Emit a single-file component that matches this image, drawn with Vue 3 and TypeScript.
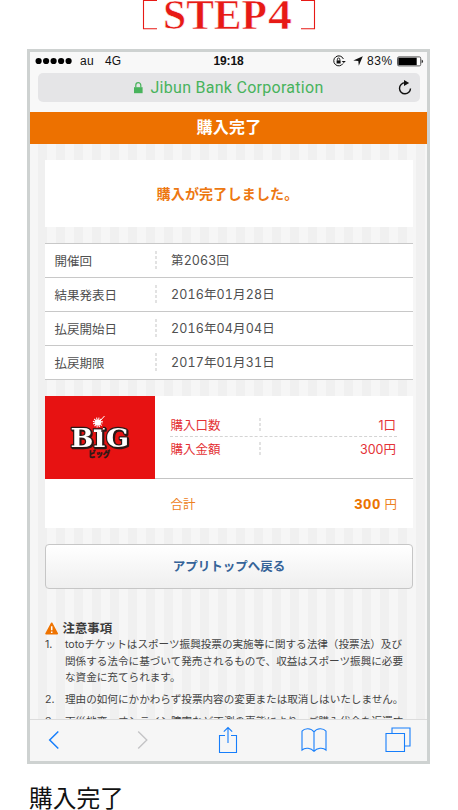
<script setup lang="ts">
interface Row { label: string; value: string }

const rows: Row[] = [
  { label: '開催回', value: '第2063回' },
  { label: '結果発表日', value: '2016年01月28日' },
  { label: '払戻開始日', value: '2016年04月04日' },
  { label: '払戻期限', value: '2017年01月31日' },
]

const notes: string[][] = [
  [
    'totoチケットはスポーツ振興投票の実施等に関する法律（投票法）及び',
    '関係する法令に基づいて発売されるもので、収益はスポーツ振興に必要',
    'な資金に充てられます。',
  ],
  ['理由の如何にかかわらず投票内容の変更または取消しはいたしません。'],
  ['天災地変、オンライン障害など不測の事態により、ご購入代金を返還す'],
]
</script>

<template>
  <main class="page">
    <header class="step">
      <svg width="172" height="40" viewBox="0 0 172 40">
        <path d="M14 .5H.5v28.3H14M158 .5h13.5v28.3H158" fill="none" stroke="#e71a16" stroke-width="1.1" />
        <text x="20" y="29.2" textLength="104" lengthAdjust="spacingAndGlyphs" class="step-text">STEP</text>
        <text x="125" y="29.2" textLength="24" lengthAdjust="spacingAndGlyphs" class="step-text">4</text>
      </svg>
    </header>

    <section class="phone">
      <div class="status">
        <div class="side">
          <svg width="38" height="8" viewBox="0 0 38 8">
            <circle v-for="i in 5" :key="i" :cx="i * 7.5 - 3.9" cy="4" r="3.1" />
          </svg>
          <span class="carrier">au</span><span>4G</span>
        </div>
        <span class="clock">19:18</span>
        <div class="side right">
          <svg width="14" height="12" viewBox="0 0 14 12" fill="none" stroke="#111">
            <path d="M10.4 4A5 5 0 1 0 10 8.5" />
            <path d="M8.6 6h4.2l-2 2z" fill="#111" stroke="none" />
            <path d="M3.6 5.4h4v3.1h-4z" fill="#111" stroke="none" />
            <path d="M4.4 5.5V4.2a1.2 1.2 0 0 1 2.4 0v1.3" stroke-width=".9" />
          </svg>
          <svg class="arrow" width="10" height="10" viewBox="0 0 10 10"><path d="M9.8.3 5.8 9.7 5.3 5 .3 4.4z" fill="#111" /></svg>
          <span class="percent">83%</span>
          <svg class="battery" width="27" height="11" viewBox="0 0 27 11">
            <rect x=".5" y=".9" width="23.2" height="9" rx="1.4" fill="#fff" stroke="#333" stroke-width=".8" />
            <path d="M1.3 1.7h18.4v7.4H1.3z" fill="#000" />
            <path d="M24.6 3.5c2 .6 2 3.2 0 3.8z" fill="#333" />
          </svg>
        </div>
      </div>

      <div class="address">
        <svg width="9" height="12" viewBox="0 0 9 12">
          <path d="M0 5.2h8.6v6H0z" fill="#48b35c" />
          <path d="M1.8 5.4V3.2a2.5 2.5 0 0 1 5 0v2.2" fill="none" stroke="#48b35c" stroke-width="1.2" />
        </svg>
        <span class="host">Jibun Bank Corporation</span>
        <svg class="reload" width="16" height="18" viewBox="0 0 16 18">
          <path d="M8.8 3.8H8a5.5 5.5 0 1 0 5.5 5.6" fill="none" stroke="#111" stroke-width="1.4" />
          <path d="M7 1l5.2 3-5.2 3z" fill="#111" />
        </svg>
      </div>

      <h1 class="title">購入完了</h1>

      <div class="content">
        <p class="message">購入が完了しました。</p>

        <dl class="table">
          <div v-for="row in rows" :key="row.label" class="row">
            <dt>{{ row.label }}</dt>
            <dd>{{ row.value }}</dd>
          </div>
        </dl>

        <div class="purchase">
          <div class="product">
            <div class="logo">
              <svg width="110" height="82" viewBox="0 0 110 82">
                <g class="big-wrap">
                  <text x="25.5" y="51" textLength="58.5" lengthAdjust="spacingAndGlyphs" class="big">BIG</text>
                </g>
                <path d="M48 28.5h10v5h-10z" fill="#e71212" />
                <path d="M54 26 59.5 20" stroke="#fff" stroke-width="1" />
                <circle cx="52.8" cy="26.4" r="3.2" fill="#fff" />
                <circle cx="52.8" cy="26.4" r="4" fill="none" stroke="#fff" stroke-width="2" stroke-dasharray="1 1.1" />
                <path d="M47.8 32.2h9.6v3.8h-9.6z" fill="#2b1917" />
                <path d="M48.8 33.4h7.6v2.6h-7.6z" fill="#fff" />
                <text x="43.5" y="61" textLength="21.5" lengthAdjust="spacingAndGlyphs" class="kana">ビッグ</text>
              </svg>
            </div>
            <div class="amounts">
              <div class="amount"><span>購入口数</span><span>1口</span></div>
              <div class="amount"><span>購入金額</span><span>300円</span></div>
            </div>
          </div>
          <div class="total"><span>合計</span><span><b>300</b> 円</span></div>
        </div>

        <button class="back" type="button">アプリトップへ戻る</button>

        <h2 class="notes-title">
          <svg width="14" height="13" viewBox="0 0 14 13">
            <path d="M6.7 1.2 12.3 11.7H1z" fill="#ee7300" stroke="#ee7300" stroke-width="1.5" stroke-linejoin="round" />
            <path d="M6.7 4.2v4M6.7 9.4v1.5" stroke="#fff" stroke-width="1.5" />
          </svg>注意事項
        </h2>
        <ol class="notes">
          <li v-for="(note, i) in notes" :key="i">
            <span class="num">{{ i + 1 }}.</span>
            <div><p v-for="line in note" :key="line">{{ line }}</p></div>
          </li>
        </ol>
      </div>

      <nav class="toolbar">
        <svg width="12" height="20" viewBox="0 0 12 20"><path d="M10.3 1.5 1.7 10l8.6 8.5" stroke="#167efb" stroke-width="1.5" /></svg>
        <svg class="forward" width="12" height="20" viewBox="0 0 12 20"><path d="M1.2 1.5 9.8 10l-8.6 8.5" stroke="#c4c4c6" stroke-width="1.4" /></svg>
        <svg class="share" width="20" height="28" viewBox="0 0 20 28"><path d="M7 9.5H1.5v17h17v-17H13M10 17V1.5M5.8 5.7 10 1.5l4.2 4.2" stroke="#167efb" stroke-width="1.1" /></svg>
        <svg class="book" width="26" height="25" viewBox="0 0 26 25"><path d="M13 23.5V4C10-.1 3.8-.1 1 3.2V22c3-2.8 9.2-2.3 12 1.5M13 4c3-4.1 9.2-4.1 12-.8V22c-3-2.8-9.2-2.3-12 1.5" stroke="#167efb" stroke-width="1.1" /></svg>
        <svg class="tabs" width="26" height="26" viewBox="0 0 26 26"><path d="M1 6.5h18.5v18H1zM7 6.5V1h18v18h-5.5" stroke="#167efb" stroke-width="1.1" /></svg>
      </nav>
    </section>

    <p class="caption">購入完了</p>
  </main>
</template>

<style>
body { margin: 0; background: #fff; overflow: hidden; }
</style>

<style scoped>
* { box-sizing: border-box; }
p, h1, h2, dl, dd, ol { margin: 0; padding: 0; }
svg { display: block; flex: none; }
.page {
  width: 458px;
  height: 810px;
  overflow: hidden;
  font-family: "Liberation Sans", "Noto Sans CJK JP", sans-serif;
  color: #444;
}
.step { height: 49px; padding-left: 143px; }
.step svg { overflow: visible; }
.step-text {
  font: bold 43px "Liberation Serif", serif;
  fill: #e71a16;
  stroke: #fff;
  stroke-width: .6px;
}
.phone {
  width: 403px;
  height: 715px;
  margin-left: 27px;
  border: 3px solid #ced2d1;
  background: #f8f8f8;
  display: flex;
  flex-direction: column;
  overflow: hidden;
}
.status {
  height: 21px;
  padding: 0 3px 3px 5px;
  display: grid;
  grid-template-columns: 1fr auto 1fr;
  align-items: center;
  flex: none;
  font-size: 12px;
  color: #111;
}
.side { display: flex; align-items: center; }
.carrier { margin: 0 11px 0 7px; letter-spacing: .3px; }
.right { justify-content: flex-end; }
.arrow { margin: 0 4px 0 6px; }
.percent { letter-spacing: .7px; }
.battery { margin-left: 4px; }
.clock { padding-right: 2px; font-weight: bold; letter-spacing: -.1px; }
.address {
  height: 29px;
  margin: 0 7px 10px 8px;
  padding: 0 7px 0 95.5px;
  border-radius: 5px;
  background: #e5e5e7;
  display: flex;
  align-items: center;
  flex: none;
}
.host { margin-left: 8px; font: 16px Roboto, sans-serif; letter-spacing: .28px; color: #48b35c; white-space: nowrap; }
.reload { margin-left: auto; }
.title {
  height: 32px;
  flex: none;
  padding-left: 1px;
  background: #ed7100;
  color: #fff;
  font-size: 16px;
  font-weight: 700;
  line-height: 31px;
  text-align: center;
  letter-spacing: .3px;
}
.content {
  height: 575px;
  flex: none;
  padding: 16px 14px 0 15px;
  overflow: hidden;
  background: repeating-linear-gradient(90deg, #f6f6f6 0 9px, #f0f0f0 9px 18px) -1px 0;
}
.message {
  height: 67px;
  padding-right: 3px;
  background: #fff;
  color: #ed7812;
  font-size: 14px;
  font-weight: 700;
  line-height: 69px;
  text-align: center;
  letter-spacing: .2px;
}
.table { margin-top: 16px; border-top: 1px solid #c8c8c8; background: #fff; }
.row {
  height: 34px;
  display: flex;
  align-items: center;
  border-bottom: 1px solid #c8c8c8;
  font-size: 12.5px;
  color: #505050;
}
dt { width: 101px; padding: 0 0 1px 9.5px; }
dd {
  height: 20px;
  padding-left: 25px;
  background: linear-gradient(#e2e2e2 60%, transparent 0) 9px 0 / 2px 5px repeat-y;
  line-height: 19px;
  font-family: Inter, "Noto Sans CJK JP", sans-serif;
  font-variant-numeric: tabular-nums;
  letter-spacing: .13px;
}
.purchase { height: 132px; margin-top: 16px; background: #fff; font-size: 12.5px; }
.product { height: 83px; display: flex; border-bottom: 1px solid #c4c4c4; }
.logo { width: 110px; height: 83px; background: #e71212; flex: none; }
.big {
  font: bold 26.5px "DejaVu Serif", serif;
  fill: #fff;
  stroke: #2b1917;
  stroke-width: 2.4px;
  stroke-linejoin: round;
  paint-order: stroke;
}
.big-wrap { filter: drop-shadow(1.2px 1px 0 #2b1917); }
.kana { font: 900 8.5px "Noto Sans CJK JP", sans-serif; fill: #2b1917; stroke: #2b1917; stroke-width: .4px; }
.amounts { width: 227px; margin: 17px 0 0 15px; color: #e43236; }
.amount {
  height: 23px;
  display: flex;
  align-items: center;
  justify-content: space-between;
  padding: 0 1px 0 .5px;
  background: linear-gradient(#e2e2e2 60%, transparent 0) 89px 5px / 2px 5px no-repeat,
    linear-gradient(#e2e2e2 60%, transparent 0) 89px 10px / 2px 5px no-repeat,
    linear-gradient(#e2e2e2 60%, transparent 0) 89px 15px / 2px 5px no-repeat;
}
.amount:first-child { height: 24px; border-bottom: 1px dashed #d4d4d4; }
.amount, .total { font-family: Inter, "Noto Sans CJK JP", sans-serif; }
.total {
  height: 48px;
  padding: 0 16px 0 125.5px;
  display: flex;
  align-items: center;
  justify-content: space-between;
  color: #ed8122;
}
.total b { font-family: "Liberation Sans", sans-serif; font-size: 15px; letter-spacing: .6px; color: #eb7400; }
.back {
  display: block;
  width: 100%;
  height: 45px;
  margin: 15.5px 0 0;
  padding: 0 0 1px;
  border: 1px solid #c6c6c6;
  border-radius: 4px;
  background: linear-gradient(#fff, #efefef);
  color: #356398;
  font: 700 12.5px "Noto Sans CJK JP", sans-serif;
}
.notes-title {
  height: 18px;
  margin-top: 30.5px;
  display: flex;
  align-items: center;
  gap: 3.5px;
  color: #3c3c3c;
  font-size: 12.4px;
  font-weight: 700;
}
.notes {
  list-style: none;
  font-family: Inter, "Noto Sans CJK JP", sans-serif;
  font-size: 10.6px;
  line-height: 16.5px;
  white-space: nowrap;
}
.notes li { display: flex; margin-bottom: 5.5px; }
.num { width: 20px; }
.toolbar {
  height: 43px;
  flex: none;
  padding: 0 16px 2px 18px;
  border-top: 1px solid #dcdcdc;
  background: #f6f6f6;
  display: flex;
  align-items: center;
  fill: none;
}
.forward { margin-left: 77px; }
.share { margin-left: 69px; }
.book { margin-left: 62.5px; }
.tabs { margin-left: 58px; }
.caption {
  margin: 17px 0 0 29px;
  color: #111;
  font-size: 23.7px;
  line-height: 36px;
}
</style>
